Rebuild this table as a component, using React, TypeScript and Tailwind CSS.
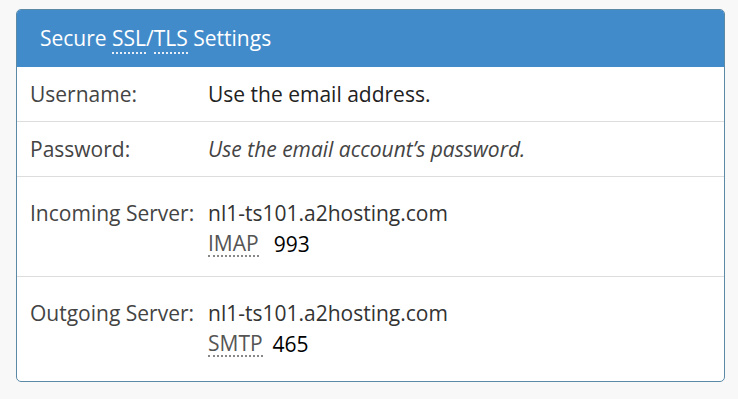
import React from "react";

export default function App() {
  const font = { fontFamily: '"Open Sans", "Noto Sans", sans-serif' };
  return (
    <div className="w-[738px] h-[399px] bg-[#f8f8f8] pt-[9px] pl-[16px]" style={font}>
      <div className="w-[709px] border border-[#5b89a6] rounded-[5px] overflow-hidden bg-white">
        <div className="h-[58px] bg-[#428bca] text-white text-[21px] leading-[58px] pl-[23px] -mt-px">
          Secure <abbr className="no-underline border-b-2 border-dotted border-[#e8eef5] leading-none">SSL</abbr>/<abbr className="no-underline border-b-2 border-dotted border-[#e8eef5] leading-none">TLS</abbr> Settings
        </div>
        <div className="text-[21px] leading-[31px]">
          <div className="flex border-b border-[#dddddd] pt-[12px] pb-[11px]">
            <div className="w-[191px] pl-[13px] text-[#444]">Username:</div>
            <div className="text-[#222]">Use the email address.</div>
          </div>
          <div className="flex border-b border-[#dddddd] pt-[12px] pb-[11px]">
            <div className="w-[191px] pl-[13px] text-[#444]">Password:</div>
            <div className="italic text-[#444]">Use the email account’s password.</div>
          </div>
          <div className="flex border-b border-[#dddddd] pt-[21px] pb-[16px]">
            <div className="w-[191px] pl-[13px] text-[#444]">Incoming Server:</div>
            <div className="text-[#333]">
              <div>nl1-ts101.a2hosting.com</div>
              <div className="flex">
                <span className="text-[#555] border-b-2 border-dotted border-[#888] leading-[23px] h-[25px] mt-[3px]">IMAP</span>
                <span className="ml-[15px] text-black">993</span>
              </div>
            </div>
          </div>
          <div className="flex pt-[21px] pb-[21px]">
            <div className="w-[191px] pl-[13px] text-[#444]">Outgoing Server:</div>
            <div className="text-[#333]">
              <div>nl1-ts101.a2hosting.com</div>
              <div className="flex">
                <span className="text-[#555] border-b-2 border-dotted border-[#888] leading-[23px] h-[25px] mt-[3px]">SMTP</span>
                <span className="ml-[10px] text-black">465</span>
              </div>
            </div>
          </div>
        </div>
      </div>
    </div>
  );
}
